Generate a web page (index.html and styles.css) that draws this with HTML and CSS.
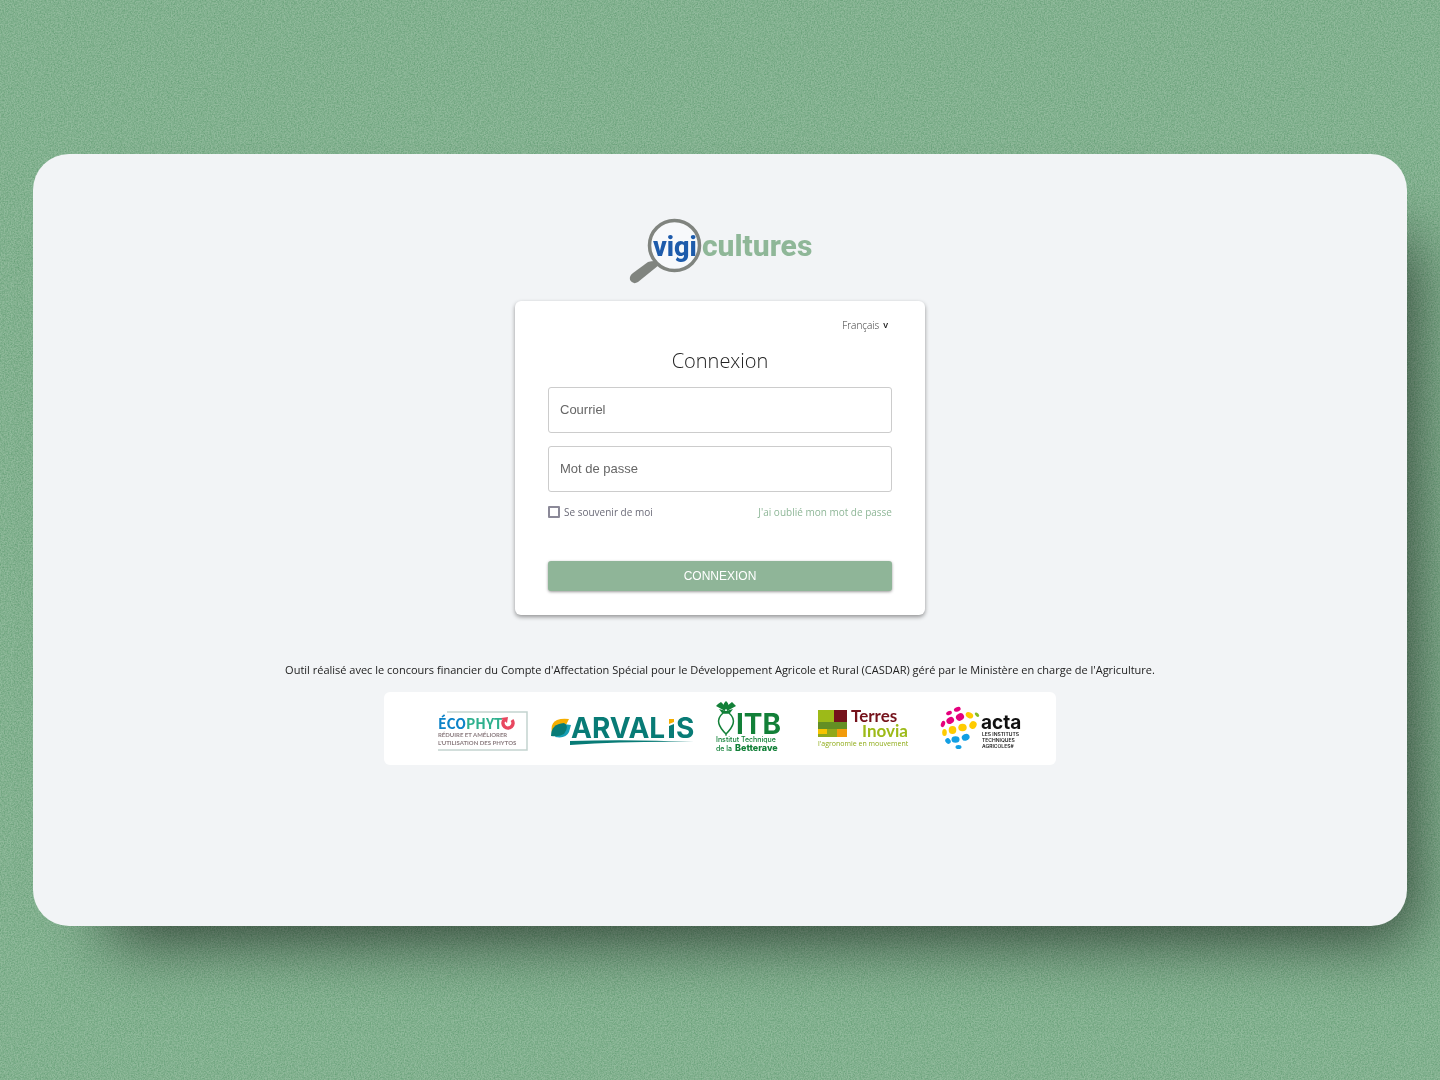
FILE: index.html
```html
<!DOCTYPE html>
<html lang="fr">
<head>
<meta charset="utf-8">
<meta name="viewport" content="width=device-width, initial-scale=1">
<title>Vigicultures – Connexion</title>
<link rel="stylesheet" href="styles.css">
</head>
<body>
<svg class="grain" aria-hidden="true">
  <filter id="grain" x="0" y="0" width="100%" height="100%" color-interpolation-filters="sRGB">
    <feTurbulence type="fractalNoise" baseFrequency="0.7" numOctaves="3" seed="4"/>
    <feColorMatrix values="0 0 0 0 0.3  0 0 0 0 0.56  0 0 0 0 0.38  1 0 0 0 -0.3"/>
  </filter>
  <rect width="100%" height="100%" filter="url(#grain)"/>
</svg>
<main class="panel">
  <svg class="logo" viewBox="0 0 180 64" role="img" aria-label="vigicultures">
    <path d="M25 42 L29 46 L8 63 Q3 66 0 61 Q-1 57 3 54 L18 43 Q21 42 25 42Z" fill="#80847f"/>
    <circle cx="44.500" cy="26.500" r="25" fill="#f7f9fb" stroke="#80847f" stroke-width="3.500"/>
    <text class="logo-text" x="23" y="37" font-size="27" fill="#1d5bab">vigi</text>
    <text class="logo-text" x="72" y="37" font-size="30" fill="#8fb798">cultures</text>
  </svg>

  <form class="card">
    <label class="language">
      <select aria-label="Langue"><option>Français</option></select>
      <span aria-hidden="true">v</span>
    </label>
    <h1 class="title">Connexion</h1>
    <div class="fields">
      <input class="field" type="email" placeholder="Courriel" aria-label="Courriel">
      <input class="field" type="password" placeholder="Mot de passe" aria-label="Mot de passe">
    </div>
    <div class="options">
      <label class="remember"><input type="checkbox">Se souvenir de moi</label>
      <a href="#">J'ai oublié mon mot de passe</a>
    </div>
    <button class="submit" type="submit">CONNEXION</button>
  </form>

  <p class="funding">Outil réalisé avec le concours financier du Compte d'Affectation Spécial pour le Développement Agricole et Rural (CASDAR) géré par le Ministère en charge de l'Agriculture.</p>

  <div class="partners">
    <svg width="94" height="56" viewBox="0 0 94 56" role="img" aria-label="Écophyto">
      <path d="M10 12H90V50H1" fill="none" stroke="#c3d3d0" stroke-width="1.500"/>
      <text class="ecophyto" x="1" y="29"><tspan fill="#0c83c8">ÉCO</tspan><tspan fill="#2fb08e">PHYT</tspan></text>
      <path d="M67 20A5 5 0 1 0 75 20" fill="none" stroke="#e8475f" stroke-width="3.500"/>
      <path d="M64 18L71 17L70 23Z" fill="#e8475f"/>
      <text class="ecophyto-line" x="1" y="37">RÉDUIRE ET AMÉLIORER</text>
      <text class="ecophyto-line" x="1" y="45">L'UTILISATION DES PHYTOS</text>
    </svg>
    <svg width="144" height="56" viewBox="0 0 144 56" role="img" aria-label="Arvalis">
      <path d="M1 33Q-1 23 6 20Q11 18 18 19L15 25L6 33Z" fill="#f5ae00"/>
      <path d="M4 37Q15 39 18 32L20 25L12 24Z" fill="#169fb5"/>
      <path d="M0 36Q0 24 13 23Q19 26 13 34Q8 37 0 36Z" fill="#087b76"/>
      <text class="arvalis" x="20" y="38">ARVAL</text>
      <path d="M118 26L123 24V38H118Z" fill="#087b76"/>
      <path d="M118 19H123V22L118 24Z" fill="#f5ae00"/>
      <text class="arvalis" x="125" y="38">S</text>
      <path d="M19 41Q80 39 143 42Q80 41 19 45Z" fill="#087b76"/>
    </svg>
    <svg width="82" height="56" viewBox="0 0 82 56" role="img" aria-label="Institut Technique de la Betterave">
      <g fill="#128038">
        <path d="M11 10Q6 5 11 1Q16 5 11 10Z"/>
        <path d="M10 11L1 6L3 4L6 2L10 6ZM12 11L21 6L19 4L17 2L12 6Z"/>
        <path d="M4 9L11 11L18 9L15 13H7Z"/>
      </g>
      <path d="M8 13C0 20 4 27 11 34C18 27 22 20 14 13Z" fill="#fff" stroke="#128038" stroke-width="1.500"/>
      <path d="M11 33V36" stroke="#128038"/>
      <text class="heavy" x="21" y="34" font-size="28" fill="#128038">ITB</text>
      <text class="institute" x="1" y="42">Institut Technique</text>
      <text class="institute" x="1" y="51">de la</text>
      <text class="institute betterave" x="20" y="51">Betterave</text>
    </svg>
    <svg width="103" height="56" viewBox="0 0 103 56" role="img" aria-label="Terres Inovia">
      <path d="M1 10H17V22H1Z" fill="#9dba18"/>
      <path d="M17 10H30V22H17Z" fill="#75121b"/>
      <path d="M1 22H30V29H1Z" fill="#648f24"/>
      <path d="M1 29H10V34H1Z" fill="#f7c400"/>
      <path d="M10 29H20V37H10ZM1 34H10V37H1Z" fill="#91a81b"/>
      <path d="M20 29H30V37H20Z" fill="#f29b0b"/>
      <text class="terres" x="34" y="22" fill="#75121b">Terres</text>
      <text class="terres" x="45" y="37" fill="#9dba18">Inovia</text>
      <text class="tagline" x="1" y="46">l'agronomie en mouvement</text>
    </svg>
    <svg width="82" height="56" viewBox="0 0 82 56" role="img" aria-label="Acta">
      <g fill="#e5007d">
        <ellipse cx="9" cy="13" rx="3" ry="2" transform="rotate(-25 9 13)"/>
        <ellipse cx="17.500" cy="9.500" rx="3.500" ry="2.200" transform="rotate(-20 17 10)"/>
        <ellipse cx="3" cy="24" rx="2" ry="3.200" transform="rotate(20 3 24)"/>
        <ellipse cx="10" cy="20.500" rx="4" ry="3.200" transform="rotate(-30 10 20)"/>
        <ellipse cx="20" cy="17" rx="4.200" ry="3.500" transform="rotate(-30 20 17)"/>
      </g>
      <g fill="#ffcb00">
        <ellipse cx="29.500" cy="15" rx="4" ry="2.800" transform="rotate(30 29 15)"/>
        <ellipse cx="33" cy="25" rx="3.500" ry="4" transform="rotate(30 33 25)"/>
        <ellipse cx="22.500" cy="27.500" rx="4.200" ry="3.800"/>
        <ellipse cx="12.500" cy="30" rx="3.800" ry="4"/>
        <ellipse cx="4.500" cy="32.500" rx="2.300" ry="3.500"/>
      </g>
      <ellipse cx="37.500" cy="14.500" rx="2.700" ry="1.600" transform="rotate(45 37 14)" fill="#88bd24"/>
      <g fill="#139fe3">
        <ellipse cx="8" cy="41" rx="2.500" ry="3" transform="rotate(-40 8 41)"/>
        <ellipse cx="15.500" cy="39.500" rx="4" ry="3.300"/>
        <ellipse cx="25.500" cy="37.500" rx="4" ry="3.300" transform="rotate(-25 25 37)"/>
        <ellipse cx="18.500" cy="47" rx="3" ry="2"/>
      </g>
      <text class="heavy" x="41" y="29" font-size="19" fill="#111">acta</text>
      <text class="acta-line" x="42" y="36">LES INSTITUTS</text>
      <text class="acta-line" x="42" y="42">TECHNIQUES</text>
      <text class="acta-line" x="42" y="48">AGRICOLES#</text>
    </svg>
  </div>
</main>
</body>
</html>
```
FILE: styles.css
```css
* { box-sizing: border-box; }

body {
  margin: 0;
  min-height: 100vh;
  padding: 33px;
  display: flex;
  align-items: center;
  background: #90ba9b;
  font-family: "Open Sans", sans-serif;
  color: #222;
}

.grain {
  position: fixed;
  inset: 0;
  z-index: -1;
  width: 100%;
  height: 100%;
}

.panel {
  width: 100%;
  aspect-ratio: 16 / 9;
  padding: 65px 24px 24px;
  display: flex;
  flex-direction: column;
  align-items: center;
  background: #f2f4f6;
  border-radius: 36px;
  box-shadow: 40px 48px 64px -36px rgba(0, 0, 0, 0.65);
}

.logo {
  width: 180px;
  height: 64px;
  margin-bottom: 18px;
  overflow: visible;
}

.logo-text {
  font-family: Roboto, sans-serif;
  font-weight: 800;
}

.card {
  width: 100%;
  max-width: 410px;
  padding: 16px 33px 24px;
  display: flex;
  flex-direction: column;
  background: #fff;
  border-radius: 6px;
  box-shadow: 0 2px 4px rgba(0, 0, 0, 0.4);
}

.language {
  align-self: flex-end;
  height: 16px;
  margin-right: 4px;
  display: flex;
  align-items: center;
  gap: 3px;
  font-size: 10px;
  font-weight: 300;
}

.language select {
  appearance: none;
  padding: 0;
  border: 0;
  background: none;
  font: inherit;
  color: #333;
}

.language span { font-weight: 600; font-size: 9px; }

.title {
  margin: 14px 0 12px;
  font-size: 20px;
  line-height: 28px;
  font-weight: 300;
  text-align: center;
}

.fields { display: grid; gap: 13px; }

.field {
  width: 100%;
  height: 46px;
  padding: 0 11px;
  border: 1px solid #ccc;
  border-radius: 3px;
  background: #fff;
  font: 13px "Liberation Sans", sans-serif;
  color: #222;
}

.field::placeholder { color: #666; opacity: 1; }

.options {
  margin: 12px 0 41px;
  display: flex;
  justify-content: space-between;
  align-items: center;
  font-size: 10px;
  line-height: 16px;
  color: #6b6b78;
}

.options a { color: #8fb798; text-decoration: none; }

.remember { display: flex; align-items: center; gap: 4px; }

.remember input {
  appearance: none;
  width: 12px;
  height: 12px;
  margin: 0;
  border: 2px solid #8b8998;
  border-radius: 1px;
}

.submit {
  height: 30px;
  border: 0;
  border-radius: 3px;
  background: #8fb598;
  color: #fff;
  font: 12px "Liberation Sans", sans-serif;
  box-shadow: 0 1px 3px rgba(0, 0, 0, 0.4);
}

.funding {
  margin: 47px 0 14px;
  font-size: 11px;
  line-height: 16px;
  text-align: center;
}

.partners {
  max-width: 100%;
  padding: 8px 34px 9px 53px;
  display: flex;
  flex-wrap: wrap;
  gap: 20px;
  background: #fff;
  border-radius: 6px;
}

.ecophyto { font: 700 14px "Noto Sans CJK JP", sans-serif; }

.ecophyto-line { font: 700 6px Lato, sans-serif; fill: #8c7d80; }

.arvalis { font: 700 28px Inter, sans-serif; fill: #087b76; }

.heavy { font-family: Inter, sans-serif; font-weight: 700; }

.institute { font: 500 7px Inter, sans-serif; fill: #128038; }

.betterave { font-size: 9px; font-weight: 800; }

.terres { font: 700 17px Lato, sans-serif; }

.tagline { font: 7px "Open Sans", sans-serif; fill: #8fab18; }

.acta-line { font: 600 5px Inter, sans-serif; fill: #222; }
```
